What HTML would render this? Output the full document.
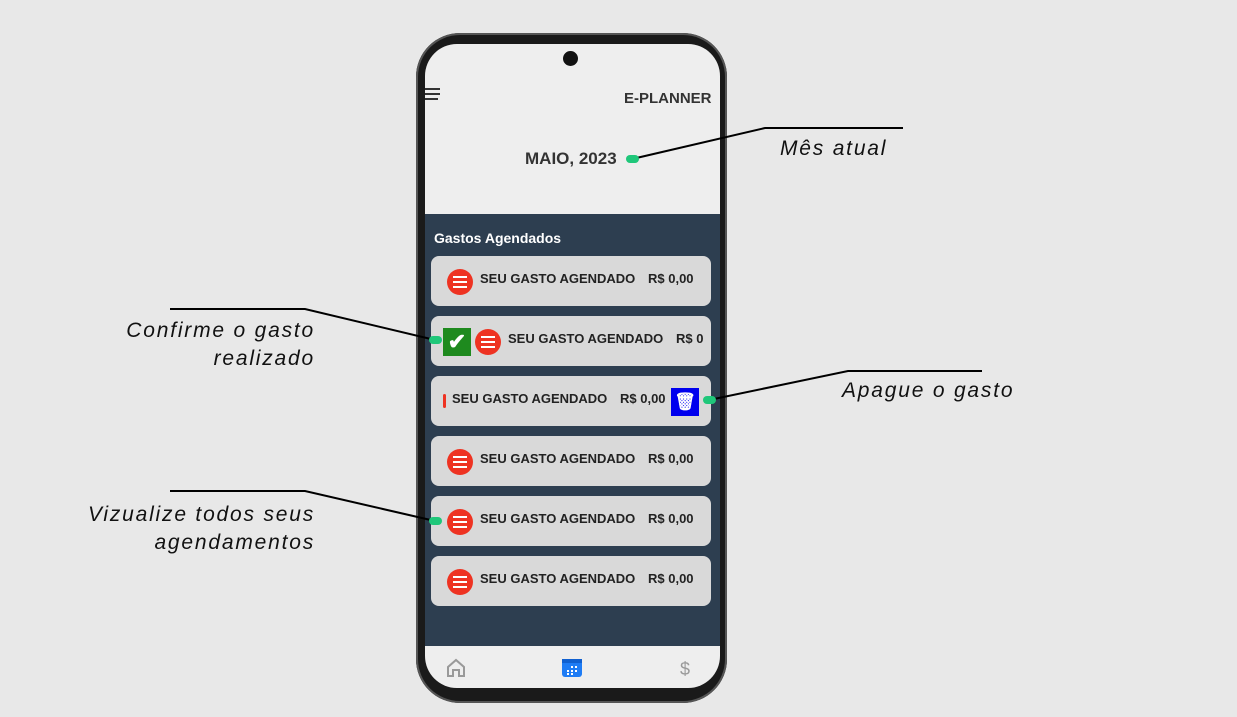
<!DOCTYPE html><html><head><style>
body{margin:0;width:1237px;height:717px;background:#e8e8e8;position:relative;overflow:hidden;font-family:"Liberation Sans",sans-serif}
.a{position:absolute}
.phone{left:416px;top:33px;width:311px;height:670px;background:#1a1a1a;border-radius:44px;box-shadow:0 0 0 2px #555 inset}
.screen{left:425px;top:44px;width:295px;height:644px;background:#eeeeee;border-radius:32px;overflow:hidden}
.dark{left:0;top:170px;width:295px;height:432px;background:#2d3e50}
.card{position:absolute;left:6px;width:280px;height:50px;background:#d9d9d9;border-radius:8px;font-weight:bold;font-size:13px;color:#222;overflow:hidden}
.card span{position:absolute;top:15px}
.ic{position:absolute;top:13px;width:26px;height:26px;border-radius:50%;background:#e32}
.ic i{position:absolute;left:6px;height:2px;width:14px;background:#fff}
.ann{font-style:italic;font-size:21px;letter-spacing:1.8px;color:#111;position:absolute;line-height:28px}
</style></head><body>
<div class="a phone"></div>
<div class="a screen">
<div class="a" style="left:-3px;top:44px;width:18px;height:2px;background:#333;box-shadow:0 5px 0 #333,-2px 10px 0 #333"></div>
<div class="a" style="left:199px;top:46px;font-weight:bold;font-size:15px;color:#333">E-PLANNER</div>
<div class="a" style="left:100px;top:105px;font-weight:bold;font-size:17px;color:#333">MAIO, 2023</div>
<div class="a dark">
<div class="a" style="left:9px;top:16px;color:#fff;font-weight:bold;font-size:14px">Gastos Agendados</div>
<div class="card" style="top:42px"><div class="ic" style="left:16px"><i style="top:7px"></i><i style="top:12px"></i><i style="top:17px"></i></div><span style="left:49px">SEU GASTO AGENDADO</span><span style="left:217px">R$ 0,00</span></div>
<div class="card" style="top:102px"><div class="a" style="left:12px;top:12px;width:28px;height:28px;background:#1e8a1e;color:#fff;font-size:22px;text-align:center;line-height:28px">✔</div><div class="ic" style="left:44px"><i style="top:7px"></i><i style="top:12px"></i><i style="top:17px"></i></div><span style="left:77px">SEU GASTO AGENDADO</span><span style="left:245px">R$ 0</span></div>
<div class="card" style="top:162px"><div class="a" style="left:12px;top:18px;width:3px;height:14px;background:#e32;border-radius:2px"></div><span style="left:21px">SEU GASTO AGENDADO</span><span style="left:189px">R$ 0,00</span><div class="a" style="left:240px;top:12px;width:28px;height:28px;background:#0000ee;color:#fff;font-size:17px;text-align:center;line-height:28px">🗑</div></div>
<div class="card" style="top:222px"><div class="ic" style="left:16px"><i style="top:7px"></i><i style="top:12px"></i><i style="top:17px"></i></div><span style="left:49px">SEU GASTO AGENDADO</span><span style="left:217px">R$ 0,00</span></div>
<div class="card" style="top:282px"><div class="ic" style="left:16px"><i style="top:7px"></i><i style="top:12px"></i><i style="top:17px"></i></div><span style="left:49px">SEU GASTO AGENDADO</span><span style="left:217px">R$ 0,00</span></div>
<div class="card" style="top:342px"><div class="ic" style="left:16px"><i style="top:7px"></i><i style="top:12px"></i><i style="top:17px"></i></div><span style="left:49px">SEU GASTO AGENDADO</span><span style="left:217px">R$ 0,00</span></div>
</div>
<svg class="a" style="left:0;top:602px" width="295" height="42">
<path d="M23 30V21l8-7 8 7v9h-5v-6h-6v6z" fill="none" stroke="#999" stroke-width="2"/>
<rect x="137" y="13" width="20" height="18" rx="3" fill="#1e7cf5"/><rect x="137" y="13" width="20" height="4" fill="#1060d0"/>
<g fill="#fff"><rect x="146" y="20" width="2" height="2"/><rect x="150" y="20" width="2" height="2"/><rect x="142" y="24" width="2" height="2"/><rect x="146" y="24" width="2" height="2"/><rect x="150" y="24" width="2" height="2"/><rect x="142" y="27" width="2" height="2"/><rect x="146" y="27" width="2" height="2"/></g>
<text x="255" y="29" font-size="18" fill="#999" font-family="Liberation Sans">$</text></svg>
</div>
<div class="a" style="left:563px;top:51px;width:15px;height:15px;border-radius:50%;background:#111"></div>
<svg class="a" style="left:0;top:0" width="1237" height="717">
<g stroke="#000" stroke-width="2" fill="none">
<path d="M632 159L765 128H903"/><path d="M170 309H305L435 340"/><path d="M709 400L848 371H982"/><path d="M170 491H305L435 521"/></g>
<g fill="#1fc77a"><rect x="626" y="155" width="13" height="8" rx="4"/><rect x="429" y="336" width="13" height="8" rx="4"/><rect x="703" y="396" width="13" height="8" rx="4"/><rect x="429" y="517" width="13" height="8" rx="4"/></g></svg>
<div class="ann" style="left:780px;top:135px">Mês atual</div>
<div class="ann" style="left:20px;width:295px;text-align:right;top:317px">Confirme o gasto<br>realizado</div>
<div class="ann" style="left:842px;top:377px">Apague o gasto</div>
<div class="ann" style="left:20px;width:295px;text-align:right;top:501px">Vizualize todos seus<br>agendamentos</div>
</body></html>
